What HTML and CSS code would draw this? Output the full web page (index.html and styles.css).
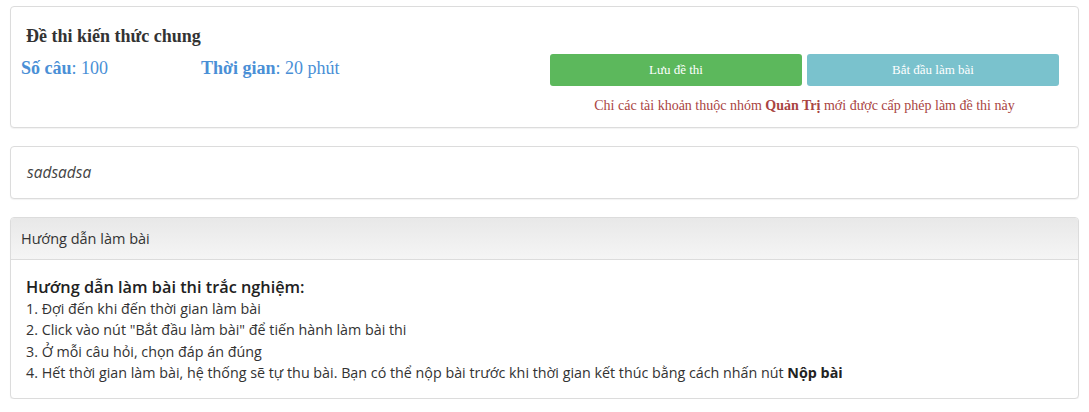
FILE: index.html
```html
<!DOCTYPE html>
<html lang="vi">
<head>
<meta charset="utf-8">
<title>Đề thi kiến thức chung</title>
<link rel="stylesheet" href="styles.css">
</head>
<body>
<div class="page">
  <section class="card info-card">
    <h1 class="exam-title">Đề thi kiến thức chung</h1>
    <div class="info-row">
      <div class="meta">
        <div class="meta-item"><b>Số câu</b>: 100</div>
        <div class="meta-item"><b>Thời gian</b>: 20 phút</div>
      </div>
      <div class="actions">
        <div class="btns">
          <button class="btn btn-green">Lưu đề thi</button>
          <button class="btn btn-blue">Bắt đầu làm bài</button>
        </div>
        <p class="notice">Chỉ các tài khoản thuộc nhóm <b>Quản Trị</b> mới được cấp phép làm đề thi này</p>
      </div>
    </div>
  </section>

  <section class="card desc-card">
    <em>sadsadsa</em>
  </section>

  <section class="card guide-card">
    <div class="guide-head">Hướng dẫn làm bài</div>
    <div class="guide-body">
      <h3 class="guide-title">Hướng dẫn làm bài thi trắc nghiệm:</h3>
      <div class="guide-line">1. Đợi đến khi đến thời gian làm bài</div>
      <div class="guide-line">2. Click vào nút "Bắt đầu làm bài" để tiến hành làm bài thi</div>
      <div class="guide-line">3. Ở mỗi câu hỏi, chọn đáp án đúng</div>
      <div class="guide-line">4. Hết thời gian làm bài, hệ thống sẽ tự thu bài. Bạn có thể nộp bài trước khi thời gian kết thúc bằng cách nhấn nút <b>Nộp bài</b></div>
    </div>
  </section>
</div>
</body>
</html>
```

FILE: styles.css
```css
* { box-sizing: border-box; }
html, body { margin: 0; padding: 0; background: #fff; }
body { font-family: "Open Sans", "Noto Sans", sans-serif; color: #333; }
.page { padding: 6px 10px 0 10px; display: flex; flex-direction: column; gap: 18px; }

.card {
  border: 1px solid #dcdcdc;
  border-radius: 4px;
  background: #fff;
  box-shadow: 0 1px 1px rgba(0,0,0,0.05);
}

.info-card { padding: 17px 19px 0 10px; height: 122px; font-family: "Liberation Serif", "Times New Roman", serif; }
.exam-title { margin: 0 0 0 5px; font-size: 18px; font-weight: bold; color: #333; line-height: 24px; }
.info-row { display: flex; justify-content: space-between; margin-top: 6px; }
.meta { display: flex; padding-top: 2px; }
.meta-item { color: #4a8fd6; font-size: 18px; line-height: 24px; width: 180px; }
.meta-item b { font-weight: bold; }
.actions { width: 509px; display: flex; flex-direction: column; align-items: center; }
.btns { display: flex; gap: 5px; width: 100%; }
.btn {
  flex: 1; height: 32px; border: none; border-radius: 3px; color: #fff;
  font-family: "Liberation Serif", "Times New Roman", serif; font-size: 13px; padding: 0;
}
.btn-green { background: #5cb85c; }
.btn-blue { background: #7ac2cd; }
.notice { margin: 11px 0 0 0; font-size: 14px; color: #a94442; line-height: 18px; }
.notice b { font-weight: bold; }

.desc-card { height: 53px; padding: 0 16px 2px 16px; display: flex; align-items: center; font-size: 15.5px; color: #444; }

.guide-card { overflow: hidden; }
.guide-head {
  height: 42px; padding: 0 10px; display: flex; align-items: center;
  font-size: 14.5px; color: #333;
  background: linear-gradient(#e8e8e8, #f5f5f5);
  border-bottom: 1px solid #dcdcdc;
}
.guide-body { padding: 16px 14px 15px 15px; font-size: 14.3px; color: #333; }
.guide-title { margin: 0; font-size: 16.3px; font-weight: 600; color: #222; line-height: 22px; }
.guide-line { line-height: 21.33px; }
.guide-line b { font-weight: 700; color: #222; }
```
